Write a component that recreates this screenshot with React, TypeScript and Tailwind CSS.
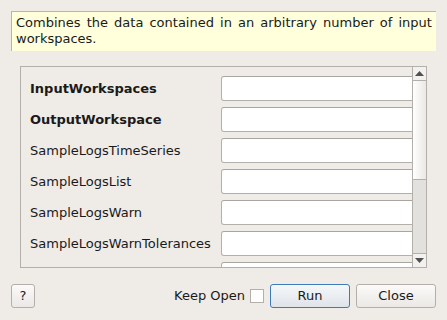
import React from 'react';

const rows = [
  { label: 'InputWorkspaces', bold: true },
  { label: 'OutputWorkspace', bold: true },
  { label: 'SampleLogsTimeSeries' },
  { label: 'SampleLogsList' },
  { label: 'SampleLogsWarn' },
  { label: 'SampleLogsWarnTolerances' },
  { label: '' },
];

function Field() {
  return (
    <div className="h-[25px] w-[220px] shrink-0 rounded-[3px] border border-[#b3afab] border-t-[#a9a5a1] bg-white" />
  );
}

export default function App() {
  return (
    <div
      className="flex h-[320px] w-[447px] flex-col overflow-hidden bg-[#efebe7] text-[13px] text-[#1a1a1a]"
      style={{ fontFamily: '"DejaVu Sans", sans-serif' }}
    >
      <div className="ml-[11px] mt-[11px] h-[40px] w-[425px] border-l border-t border-[#b8b5b0] bg-[#ffffdc] px-[4px] pt-[3px] leading-[16px]">
        <div className="flex justify-between">
          {'Combines the data contained in an arbitrary number of input'.split(' ').map((w, i) => (
            <span key={i}>{w}</span>
          ))}
        </div>
        <div>workspaces.</div>
      </div>

      <div className="ml-[20px] mt-[15px] flex h-[202px] w-[407px] border border-[#b3afab]">
        <div className="flex flex-1 flex-col gap-[6px] overflow-hidden pt-[9px]">
          {rows.map((r, i) => (
            <div key={i} className="flex h-[25px] shrink-0 items-center">
              <div className={`w-[200px] shrink-0 pl-[9px] ${r.bold ? 'font-bold' : ''}`}>{r.label}</div>
              <Field />
            </div>
          ))}
        </div>
        <div className="flex w-[14px] flex-col border-l border-[#b3afab]">
          <div className="flex h-[14px] items-center justify-center border-b border-[#b3afab] bg-[#f3f1ef]">
            <svg width="9" height="5" viewBox="0 0 9 5">
              <polygon points="0,5 9,5 4.5,0" fill="#505050" />
            </svg>
          </div>
          <div className="h-[99px] border-b border-[#b3afab] bg-gradient-to-r from-white to-[#ebe8e5]" />
          <div className="flex-1 bg-[#e3e1de]" />
          <div className="flex h-[14px] items-center justify-center border-t border-[#b3afab] bg-[#f3f1ef]">
            <svg width="9" height="5" viewBox="0 0 9 5">
              <polygon points="0,0 9,0 4.5,5" fill="#505050" />
            </svg>
          </div>
        </div>
      </div>

      <div className="mt-[16px] flex h-[24px] items-center">
        <button className="ml-[11px] h-[24px] w-[24px] rounded-[3px] border border-[#b3afab] bg-gradient-to-b from-[#fbfaf9] to-[#ebe8e5] text-[13px]">
          ?
        </button>
        <div className="ml-auto flex items-center">
          <span>Keep Open</span>
          <div className="ml-[5px] h-[14px] w-[14px] border border-[#b3afab] bg-white" />
        </div>
        <button className="ml-[6px] h-[24px] w-[80px] rounded-[3px] border border-[#3d7bb8] bg-gradient-to-b from-[#f5f7f9] to-[#dfe4ea] text-[13px]">
          Run
        </button>
        <button className="ml-[6px] mr-[11px] h-[24px] w-[80px] rounded-[3px] border border-[#b3afab] bg-gradient-to-b from-[#fbfaf9] to-[#ebe8e5] text-[13px]">
          Close
        </button>
      </div>
    </div>
  );
}
